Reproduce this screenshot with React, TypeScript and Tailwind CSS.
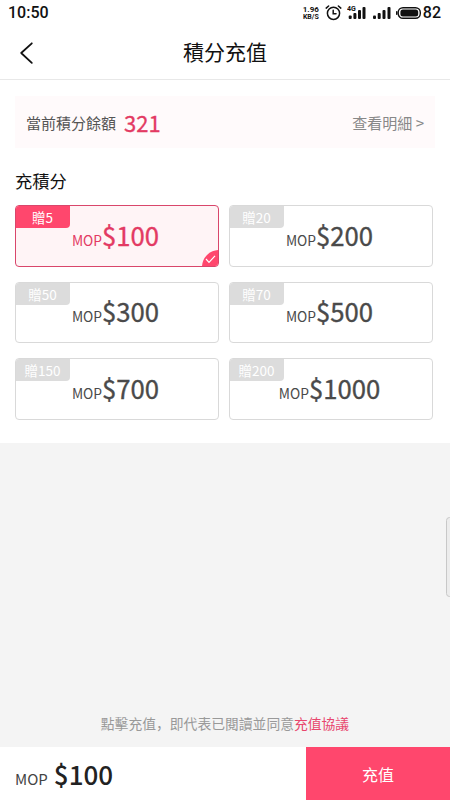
import { useState } from 'react';

const options = [
  { amount: 100, bonus: 5 },
  { amount: 200, bonus: 20 },
  { amount: 300, bonus: 50 },
  { amount: 500, bonus: 70 },
  { amount: 700, bonus: 150 },
  { amount: 1000, bonus: 200 },
];

function StatusBar() {
  return (
    <div className="flex h-[26px] items-center justify-between pl-[8px] pr-[9px] font-['Roboto',sans-serif] text-[#111]">
      <span className="text-[16px] font-medium leading-[26px]">10:50</span>
      <div className="flex h-[26px] items-center">
        <div className="mr-px w-[20px] text-center font-bold">
          <div className="text-[8px] leading-[8px]">1.96</div>
          <div className="text-[7px] leading-[7px]">KB/S</div>
        </div>
        <svg className="ml-[3px]" width="17" height="17" viewBox="0 0 17 17" fill="none" stroke="#111" strokeWidth="1.5" strokeLinecap="round">
          <circle cx="8.5" cy="8.3" r="6.1" />
          <path d="M8.2 5.3v3.5h2.8M1.2 3.1 3.6 1M15.8 3.1l-2.4-2.1" />
        </svg>
        <svg className="ml-[5px]" width="20" height="16" viewBox="0 0 20 16" fill="#111">
          <text x="0" y="6" fontSize="7" fontWeight="700">4G</text>
          <rect x="1.7" y="10.5" width="3" height="3.5" rx="1" />
          <rect x="6.4" y="8" width="3" height="6" rx="1" />
          <rect x="11" y="5" width="3" height="9" rx="1" />
          <rect x="15.5" y="2" width="3" height="12" rx="1" />
        </svg>
        <svg className="ml-[5px]" width="20" height="16" viewBox="0 0 20 16" fill="#111">
          <rect x="1" y="10.5" width="3" height="3.5" rx="1" />
          <rect x="5.7" y="8" width="3" height="6" rx="1" />
          <rect x="10.5" y="5" width="3" height="9" rx="1" />
          <rect x="15.5" y="2" width="3" height="12" rx="1" />
        </svg>
        <svg className="ml-[4px]" width="26" height="14" viewBox="0 0 26 14">
          <rect x="2.2" y="1.7" width="22.1" height="10.6" rx="4.8" fill="none" stroke="#111" strokeWidth="1.4" />
          <rect x="4.4" y="3.4" width="17.8" height="7.2" rx="2.5" fill="#111" />
          <rect x="0" y="5" width="1.5" height="4" rx=".7" fill="#111" />
        </svg>
        <span className="ml-[1px] text-[16px] font-medium leading-[26px]">82</span>
      </div>
    </div>
  );
}

function AmountCard({ amount, bonus, selected, onSelect }: { amount: number; bonus: number; selected: boolean; onSelect: () => void }) {
  return (
    <button
      onClick={onSelect}
      className={`relative flex h-[61.5px] items-center justify-center overflow-hidden rounded-[4px] border ${
        selected ? 'border-[#d9466b] bg-[#fff4f6] text-[#e33a63]' : 'border-[#d9d9d9] bg-white text-[#4a4a4a]'
      }`}
    >
      <span
        className={`absolute -left-px -top-px flex h-[23px] w-[55px] items-center justify-center rounded-br-[4px] pt-px text-[13.5px] leading-[20px] text-white ${
          selected ? 'bg-[#ff476d]' : 'bg-[#dcdcdc]'
        }`}
      >
        贈{bonus}
      </span>
      <span className="flex items-baseline pr-[3px] pt-[3px] leading-[38px]">
        <span className="text-[13.8px]">MOP</span>
        <span className="text-[25.7px] [-webkit-text-stroke:0.35px_currentColor]">${amount}</span>
      </span>
      {selected && (
        <svg className="absolute -bottom-px -right-px" width="17" height="17" viewBox="0 0 17 17">
          <path d="M0 17A17 17 0 0 1 17 0V17Z" fill="#ff476d" />
          <path d="m4 9 3 3.3 6-6.5" fill="none" stroke="#fff" strokeWidth="1.2" />
        </svg>
      )}
    </button>
  );
}

export default function App() {
  const [selected, setSelected] = useState(100);
  return (
    <div className="relative flex h-[800px] w-[450px] flex-col overflow-hidden bg-[#f4f4f4] font-['Noto_Sans_CJK_SC',sans-serif]">
      <div className="h-[443px] shrink-0 bg-white">
        <StatusBar />
        <header className="grid h-[54px] grid-cols-[60px_1fr_60px] items-center border-b border-[#e8e8e8]">
          <svg className="ml-[19px]" width="16" height="24" viewBox="0 0 16 24" fill="none" stroke="#111" strokeWidth="1.8" strokeLinecap="round" strokeLinejoin="round">
            <path d="M12.8 2.3 2.2 12l10.6 9.8" />
          </svg>
          <h1 className="-mt-[4px] text-center text-[21px] leading-[30px] text-[#111]">積分充值</h1>
        </header>
        <main className="pl-[15px] pr-[17px] pt-[16px]">
          <section className="-mr-[2px] flex h-[52px] items-center bg-[#fffafb] pl-[11px] pr-[11px]">
            <span className="pt-[2px] text-[15px] leading-[22px] text-[#555]">當前積分餘額</span>
            <span className="-mt-px ml-[8px] text-[22px] leading-[30px] text-[#e33a63] [-webkit-text-stroke:0.3px_currentColor]">321</span>
            <span className="ml-auto pt-[2px] text-[15px] leading-[22px] text-[#888]">查看明細 &gt;</span>
          </section>
          <h2 className="mt-[20px] text-[17.3px] leading-[26px] text-[#111]">充積分</h2>
          <div className="mt-[11px] grid grid-cols-2 gap-x-[10px] gap-y-[15px]">
            {options.map((o) => (
              <AmountCard key={o.amount} {...o} selected={selected === o.amount} onSelect={() => setSelected(o.amount)} />
            ))}
          </div>
        </main>
      </div>
      <div className="absolute -right-[3px] top-[517px] h-[80px] w-[7px] rounded-[4px] border border-[#c8c8c8] bg-[#ececec]" />
      <p className="mt-auto pb-[13px] text-center text-[13.8px] leading-[22px] text-[#999]">
        點擊充值，即代表已閱讀並同意<span className="text-[#e8466d]">充值協議</span>
      </p>
      <footer className="flex h-[53px] shrink-0 bg-white">
        <div className="flex flex-1 items-baseline pl-[15px] leading-[54px] text-[#222]">
          <span className="text-[15px] text-[#444]">MOP</span>
          <span className="ml-[6px] text-[26px] font-medium">${selected}</span>
        </div>
        <button className="w-[144px] bg-[#ff476d] text-[16px] text-white">充值</button>
      </footer>
    </div>
  );
}
